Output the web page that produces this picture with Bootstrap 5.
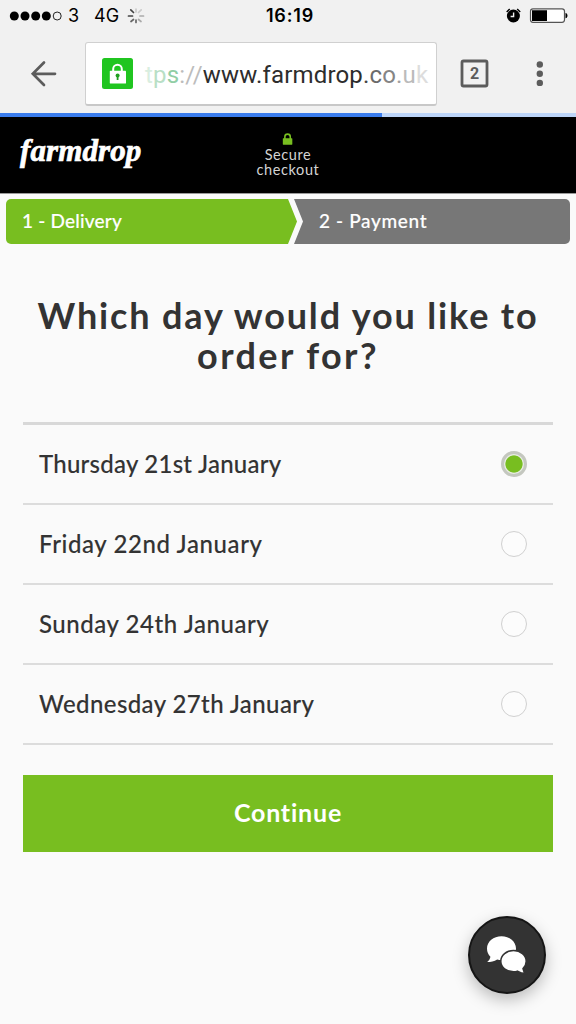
<!DOCTYPE html>
<html lang="en">
<head>
<meta charset="utf-8">
<meta name="viewport" content="width=device-width, initial-scale=1">
<title>Farmdrop checkout</title>
<link href="https://cdn.jsdelivr.net/npm/bootstrap@5.3.0/dist/css/bootstrap.min.css" rel="stylesheet">
<style>
body{background:#fafafa;color:#333;font-family:Lato,"Open Sans",sans-serif;height:1024px;overflow:hidden}
.chrome-ui{background:#f1f1f1;height:113px;font-family:Inter,Roboto,sans-serif;color:#000}
.status-row{height:32px;font-size:18px;line-height:32px}
.clock{font-weight:600;font-size:18px;letter-spacing:.85px}
.tool-row{height:81px;padding-top:10px}
.url-box{width:352px;height:64px;margin-left:27px;background:#fff;border:1px solid #d0d0d0;border-bottom:2px solid #c8c8c8;border-radius:3px}
.url-text{font:24px/30px Roboto,sans-serif;white-space:nowrap;letter-spacing:.17px;margin-left:12px;width:288px;padding-top:2px;color:#2d2d2d}
.load-bar{height:4px;background:#bdd5f8;border-radius:0}
.load-bar .progress-bar{background:#3b7ded}
.site-head{height:77px;background:#000;border-bottom:1px solid #999}
.brand{font:italic bold 31px/36px "Liberation Serif",serif;color:#fff;-webkit-text-stroke:.7px #fff;padding-left:20px;letter-spacing:.1px}
.secure{color:#d4d4d4;font-size:14.5px;line-height:15px;letter-spacing:.6px}
.steps{margin:5px 6px 0;height:45px}
.step{font-size:19px;font-weight:500;line-height:43px;color:#fff;-webkit-text-stroke:.15px #fff}
.step-a{width:291px;background:#78be20;border-radius:5px 0 0 5px;padding-left:16px;letter-spacing:.2px;clip-path:polygon(0 0,282px 0,100% 50%,282px 100%,0 100%)}
.step-b{margin-left:-3px;background:#777;border-radius:0 5px 5px 0;padding-left:25px;letter-spacing:.65px;clip-path:polygon(0 0,100% 0,100% 100%,0 100%,9px 50%)}
.question{font-size:36px;font-weight:700;line-height:40px;letter-spacing:1.85px;margin:51px 0 0}
.question .last-line{letter-spacing:2.4px}
.days{margin:47px 23px 0;border-top:3px solid #d8d8d8}
.day{height:80px;border-bottom:2px solid #dcdcdc;padding:0 26px 0 16px;font-size:24px;font-weight:500;-webkit-text-stroke:.1px #333;cursor:pointer}
.d1{letter-spacing:.25px}.d2{letter-spacing:.6px}.d3{letter-spacing:.55px}.d4{letter-spacing:.4px}
.day .form-check-input{width:26px;height:26px;border:1.5px solid #d0d0d0;background:#fcfcfc;margin:0;box-shadow:none}
.day .form-check-input:checked{border:3px solid #c4c7bf;background:radial-gradient(circle,#78be20 8.2px,#e8ece3 9px)}
.go{height:77px;margin:30px 23px 0;padding-bottom:7px;background:#78be20;color:#fff!important;border:0;border-radius:0;font-size:25px;font-weight:700;letter-spacing:.8px}
.chat{right:30px;bottom:30px;width:78px;height:78px;border:2px solid #151515;background:#333;box-shadow:0 6px 16px rgba(0,0,0,.25)}
</style>
</head>
<body>
<div class="chrome-ui">
  <div class="status-row d-flex position-relative">
    <svg width="64" height="32"><g><circle cx="14.3" cy="16" r="4.5"/><circle cx="25" cy="16" r="4.5"/><circle cx="35.700" cy="16" r="4.5"/><circle cx="46.300" cy="16" r="4.5"/><circle cx="57.200" cy="16" r="4" fill="none" stroke="#222" stroke-width="1"/></g></svg>
    <span style="width:30px" class="ps-1">3</span><span>4G</span>
    <svg class="ms-2" width="20" height="32" viewBox="0 0 20 32" stroke-width="1.7" stroke-linecap="round" fill="none"><path stroke="#444" d="M6.500 12.500 3.800 9.800M5.500 16H1.500"/><path stroke="#666" d="M6.500 19.500 4 21.500M9 20v2.500"/><path stroke="#aaa" d="m11.500 19.500 2.500 2M13 16h3.500"/><path stroke="#ccc" d="m11.500 12.500 2.700-2.700M9 12V9"/></svg>
    <span class="clock position-absolute start-50 translate-middle-x ps-1">16:19</span>
    <svg class="ms-auto" width="76" height="32" viewBox="500 0 76 32"><circle cx="513.400" cy="16" r="6.500"/><path d="m506.700 12 3-3m10.500 3-3-3" stroke="#000" stroke-width="1.500"/><path d="M513.600 12.500v4h-3" stroke="#f1f1f1" stroke-width="1.400" fill="none"/><rect x="530.500" y="8.800" width="34" height="13.500" rx="2.500" fill="#fff" stroke="#555" stroke-width="1.200"/><path d="M532 10.300h15v10.600h-15zM565.500 13c2.700.3 2.700 5 0 5.300z"/></svg>
  </div>
  <div class="tool-row d-flex">
    <svg width="58" height="64" viewBox="0 0 58 64" fill="none" stroke="#5c5c5c" stroke-width="2.700" stroke-linecap="round"><path d="M55 31.800H33.500M44 20.500 32.800 31.800l11.200 11.200"/></svg>
    <div class="url-box d-flex align-items-center">
      <svg class="ms-3 flex-shrink-0" width="31" height="31" viewBox="0 0 31 31"><rect width="31" height="31" rx="2.500" fill="#20c520"/><path d="M8.500 12.700h14.800q.7 0 .7.700v11.500q0 .7-.7.700H8.500q-.7 0-.7-.7V13.400q0-.7.700-.7z" fill="#fff"/><path d="M11.200 13v-2a4.300 4.300 0 0 1 8.600 0v2" fill="none" stroke="#fff" stroke-width="2"/><circle cx="15.600" cy="17.500" r="2" fill="#20a020"/><path d="M15.600 18v4" stroke="#20a020" stroke-width="1.800"/></svg>
      <div class="url-text"><span style="color:#d9eee0">t</span><span style="color:#b9dfc6">p</span><span style="color:#91cea5">s</span><span style="color:#bcbcbc">://</span>www.farmdrop<span style="color:#444">.</span><span style="color:#6b6b6b">c</span><span style="color:#858585">o</span><span style="color:#a0a0a0">.</span><span style="color:#bbb">u</span><span style="color:#ddd">k</span></div>
    </div>
    <svg width="139" height="64" viewBox="437 42 139 64"><rect x="462" y="61" width="25" height="25" rx="1.500" fill="none" stroke="#5c5c5c" stroke-width="2.800"/><text x="474.600" y="79" text-anchor="middle" font-family="Roboto" font-size="16" font-weight="700" fill="#5c5c5c">2</text><g fill="#5c5c5c"><circle cx="539.800" cy="64.500" r="3.200"/><circle cx="539.800" cy="73.700" r="3.200"/><circle cx="539.800" cy="82.900" r="3.200"/></g></svg>
  </div>
</div>
<div class="progress load-bar"><div class="progress-bar" style="width:66.300%"></div></div>
<header class="site-head d-flex position-relative">
  <div class="brand pt-3">farmdrop</div>
  <div class="secure position-absolute start-50 translate-middle-x text-center pt-3">
    <svg class="d-block mx-auto" width="10" height="14" viewBox="0 1 10 14"><rect y="6.300" width="10" height="6.500" rx=".8" fill="#78be20"/><path d="M2.300 7V4.800a2.700 2.700 0 0 1 5.400 0V7" fill="none" stroke="#78be20" stroke-width="1.600"/></svg>
    Secure<br>checkout
  </div>
</header>
<main>
  <div class="steps d-flex">
    <div class="step step-a">1 - Delivery</div>
    <div class="step step-b flex-grow-1">2 - Payment</div>
  </div>
  <h1 class="question text-center">Which day would you like to<br><span class="last-line">order for?</span></h1>
  <form>
    <div class="days">
      <label class="day d-flex align-items-center justify-content-between"><span class="d1">Thursday 21st January</span><input class="form-check-input" type="radio" name="day" checked></label>
      <label class="day d-flex align-items-center justify-content-between"><span class="d2">Friday 22nd January</span><input class="form-check-input" type="radio" name="day"></label>
      <label class="day d-flex align-items-center justify-content-between"><span class="d3">Sunday 24th January</span><input class="form-check-input" type="radio" name="day"></label>
      <label class="day d-flex align-items-center justify-content-between"><span class="d4">Wednesday 27th January</span><input class="form-check-input" type="radio" name="day"></label>
    </div>
    <div class="d-grid"><button type="button" class="btn go">Continue</button></div>
  </form>
</main>
<button type="button" class="chat btn rounded-circle position-fixed p-0" aria-label="Chat"><svg class="d-block" width="74" height="74" viewBox="470 918 74 74"><path fill="#fff" d="M501.500 936.300c8 0 14.500 5.300 14.500 12.200 0 6.700-6.500 11.600-14.500 11.600-1.500 0-3-.2-4.300-.6-3 1.800-6.500 2.500-10 2.600 2-1.800 3-3.500 3.200-5.300-2.200-2.200-3.400-5-3.400-8.300 0-6.900 6.500-12.200 14.500-12.200z"/><path fill="#fff" stroke="#333" stroke-width="1.500" d="M513.500 950.500c7 0 12.700 4.700 12.700 10.800 0 2.900-1.200 5.400-3.200 7.300.2 1.700 1 3.300 2.700 5-3.300 0-6-.9-8.300-2.400-1.200.4-2.600.6-3.900.6-7 0-12.700-4.400-12.700-10.500s5.700-10.800 12.700-10.800z"/></svg></button>
<script src="https://cdn.jsdelivr.net/npm/bootstrap@5.3.0/dist/js/bootstrap.bundle.min.js"></script>
</body>
</html>
